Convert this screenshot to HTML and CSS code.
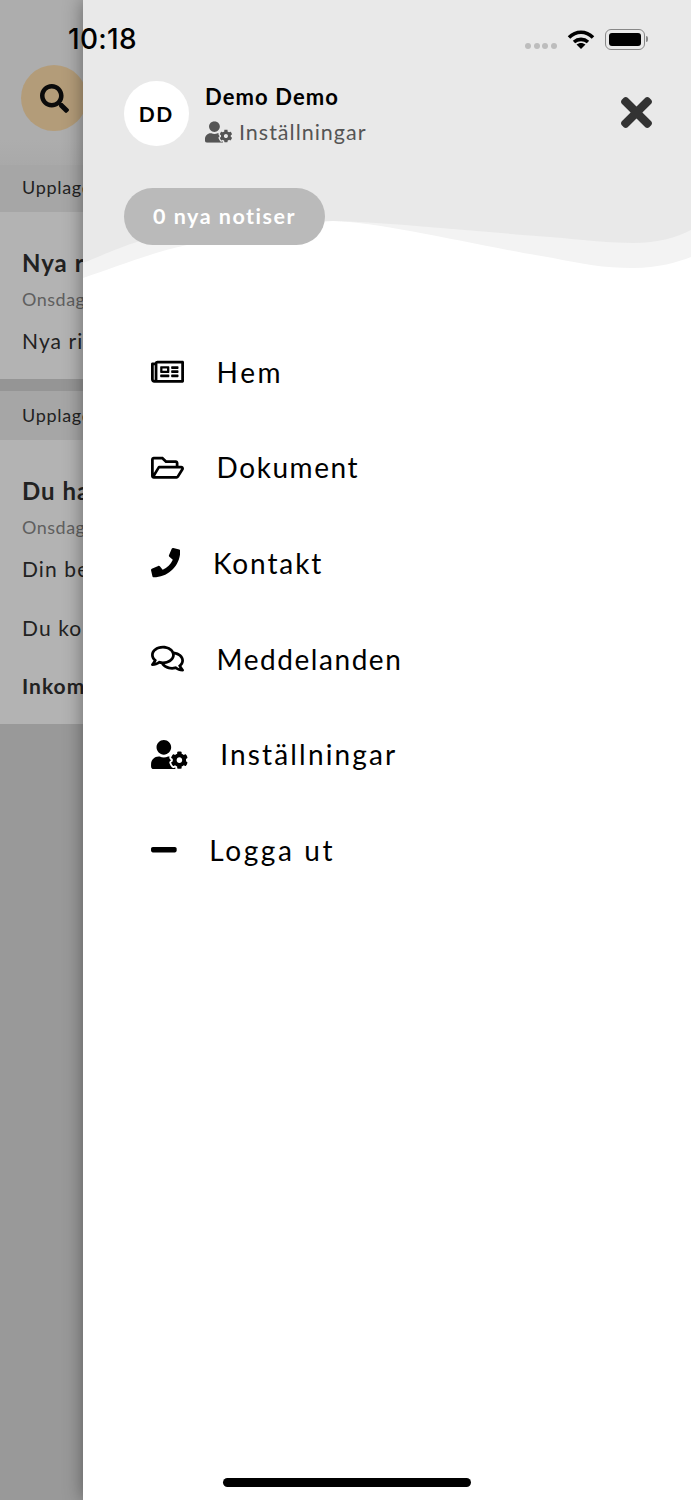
FILE: index.html
```html
<!DOCTYPE html>
<html lang="sv">
<head>
<meta charset="utf-8">
<title>Meny</title>
<link rel="stylesheet" href="styles.css">
</head>
<body>
<div class="screen">
  <div class="behind">
    <div class="topbar">
      <div class="search">
        <svg class="search-icon" viewBox="0 0 512 512"><path d="M505 442.7L405.3 343c-4.5-4.5-10.6-7-17-7H372c27.6-35.3 44-79.7 44-128C416 93.1 322.9 0 208 0S0 93.1 0 208s93.1 208 208 208c48.3 0 92.7-16.4 128-44v16.3c0 6.4 2.5 12.5 7 17l99.7 99.7c9.4 9.4 24.6 9.4 33.9 0l28.3-28.3c9.4-9.4 9.4-24.6.1-34zM208 336c-70.7 0-128-57.2-128-128 0-70.7 57.2-128 128-128 70.7 0 128 57.2 128 128 0 70.7-57.2 128-128 128z"/></svg>
      </div>
    </div>
    <div class="band">Upplagd av Demo</div>
    <div class="card card-one">
      <div class="card-title">Nya riktlinjer</div>
      <div class="card-date">Onsdag 12 maj</div>
      <div class="card-text">Nya riktlinjer gäller</div>
    </div>
    <div class="divider"></div>
    <div class="band band-two">Upplagd av Demo</div>
    <div class="card card-two">
      <div class="card-title">Du har fått ett svar</div>
      <div class="card-date">Onsdag 12 maj</div>
      <div class="card-text">Din begäran är klar</div>
      <div class="card-text card-gap">Du kommer få besked</div>
      <div class="card-strong">Inkommande</div>
    </div>
  </div>

  <div class="drawer">
    <svg class="wave" viewBox="0 0 608 285" aria-hidden="true">
      <path class="wave-light" d="M0 278C30 268 70 252 104 245C150 232 200 222 250 221C300 222 400 247 470 258C500 264 520 268 550 268C575 268 595 262 608 257V0H0Z"/>
      <path class="wave-dark" d="M0 263C20 255 40 246 54 242C100 230 190 222 250 221C300 222 400 232 467 237C500 240 530 243 550 243C575 243 595 237 608 230V0H0Z"/>
    </svg>
    <div class="profile">
      <div class="avatar">DD</div>
      <div class="who">
        <div class="name">Demo Demo</div>
        <div class="settings">
          <svg class="settings-icon" viewBox="0 0 640 512"><use href="#user-cog"/></svg>
          <span>Inställningar</span>
        </div>
      </div>
      <svg class="close" viewBox="0 80 352 352"><path d="M242.72 256l100.07-100.07c12.28-12.28 12.28-32.19 0-44.48l-22.24-22.24c-12.28-12.28-32.19-12.28-44.48 0L176 189.28 75.93 89.21c-12.28-12.28-32.19-12.28-44.48 0L9.21 111.45c-12.28 12.28-12.28 32.19 0 44.48L109.28 256 9.21 356.07c-12.28 12.28-12.28 32.19 0 44.48l22.24 22.24c12.28 12.28 32.2 12.28 44.48 0L176 322.72l100.07 100.07c12.28 12.28 32.2 12.28 44.48 0l22.24-22.24c12.28-12.28 12.28-32.19 0-44.48L242.72 256z"/></svg>
    </div>
    <div class="notices">0 nya notiser</div>
    <nav class="menu">
      <a class="item"><svg class="icon w-33" viewBox="0 0 576 512"><path d="M552 64H112c-20.858 0-38.643 13.377-45.248 32H24c-13.255 0-24 10.745-24 24v272c0 30.928 25.072 56 56 56h496c13.255 0 24-10.745 24-24V88c0-13.255-10.745-24-24-24zM48 392V144h16v248c0 4.411-3.589 8-8 8s-8-3.589-8-8zm480 8H111.422c.374-2.614.578-5.283.578-8V112h416v288zM172 280h136c6.627 0 12-5.373 12-12v-96c0-6.627-5.373-12-12-12H172c-6.627 0-12 5.373-12 12v96c0 6.627 5.373 12 12 12zm28-80h80v40h-80v-40zm-40 140v-24c0-6.627 5.373-12 12-12h136c6.627 0 12 5.373 12 12v24c0 6.627-5.373 12-12 12H172c-6.627 0-12-5.373-12-12zm192 0v-24c0-6.627 5.373-12 12-12h104c6.627 0 12 5.373 12 12v24c0 6.627-5.373 12-12 12H364c-6.627 0-12-5.373-12-12zm0-144v-24c0-6.627 5.373-12 12-12h104c6.627 0 12 5.373 12 12v24c0 6.627-5.373 12-12 12H364c-6.627 0-12-5.373-12-12zm0 72v-24c0-6.627 5.373-12 12-12h104c6.627 0 12 5.373 12 12v24c0 6.627-5.373 12-12 12H364c-6.627 0-12-5.373-12-12z"/></svg><span class="label ls-wide">Hem</span></a>
      <a class="item"><svg class="icon w-33" viewBox="0 0 576 512"><path d="M527.9 224H480v-48c0-26.5-21.5-48-48-48H272l-64-64H48C21.5 64 0 85.5 0 112v288c0 26.5 21.5 48 48 48h400c16.5 0 31.9-8.5 40.7-22.6l79.9-128c20-31.9-3-73.4-40.7-73.4zM48 118c0-3.3 2.7-6 6-6h134.1l64 64H426c3.3 0 6 2.7 6 6v42H152c-16.8 0-32.4 8.8-41.1 23.2L48 351.4zm400 282H72l77.2-128H528z"/></svg><span class="label ls-base">Dokument</span></a>
      <a class="item"><svg class="icon w-30" viewBox="0 0 512 512"><path d="M493.4 24.6l-104-24c-11.3-2.6-22.9 3.3-27.5 13.9l-48 112c-4.2 9.8-1.4 21.3 6.9 28l60.6 49.6c-36 76.7-98.9 140.5-177.2 177.2l-49.6-60.6c-6.8-8.3-18.2-11.1-28-6.9l-112 48C3.9 366.5-2 378.1.6 389.4l24 104C27.1 504.2 36.7 512 48 512c256.1 0 464-207.5 464-464 0-11.2-7.7-20.9-18.6-23.4z"/></svg><span class="label ls-mid">Kontakt</span></a>
      <a class="item"><svg class="icon w-33" viewBox="0 0 576 512"><path d="M532 386.2c27.5-27.1 44-61.1 44-98.2 0-80-76.5-146.1-176.2-157.9C368.3 72.5 294.3 32 208 32 93.1 32 0 103.6 0 192c0 37 16.5 71 44 98.2-15.3 30.7-37.3 54.5-37.7 54.9-6.3 6.7-8.1 16.5-4.4 25 3.6 8.5 12 14 21.2 14 53.5 0 96.7-20.2 125.2-38.8 9.2 2.1 18.7 3.7 28.4 4.9C208.1 407.6 281.8 448 368 448c20.8 0 40.8-2.4 59.8-6.8C456.3 459.7 499.4 480 553 480c9.2 0 17.5-5.5 21.2-14 3.6-8.5 1.9-18.3-4.4-25-.4-.3-22.5-24.1-37.8-54.8zm-392.8-92.3L122.1 305c-14.1 9.1-28.5 16.3-43.1 21.4 2.7-4.7 5.4-9.7 8-14.8l15.5-31.1L77.7 256C64.2 242.6 48 220.7 48 192c0-60.7 73.3-112 160-112s160 51.3 160 112-73.3 112-160 112c-16.5 0-33-1.9-49-5.6l-19.8-4.5zM498.3 352l-24.7 24.4 15.5 31.1c2.6 5.1 5.3 10.1 8 14.8-14.6-5.1-29-12.3-43.1-21.4l-17.1-11.1-19.9 4.6c-16 3.7-32.5 5.6-49 5.6-54 0-102.2-20.1-131.3-49.7C338 339.5 416 272.9 416 192c0-3.4-.4-6.7-.7-10C479.7 196.5 528 238.8 528 288c0 28.7-16.2 50.6-29.7 64z"/></svg><span class="label ls-base">Meddelanden</span></a>
      <a class="item"><svg class="icon w-37" viewBox="0 0 640 512"><use href="#user-cog"/></svg><span class="label ls-mid2">Inställningar</span></a>
      <a class="item"><svg class="icon w-26" viewBox="0 0 448 512"><path d="M416 208H32c-17.67 0-32 14.33-32 32v32c0 17.67 14.33 32 32 32h384c17.67 0 32-14.33 32-32v-32c0-17.67-14.33-32-32-32z"/></svg><span class="label ls-wide">Logga ut</span></a>
    </nav>
  </div>

  <div class="status">
    <span class="time">10:18</span>
    <div class="status-icons">
      <div class="dots"><i></i><i></i><i></i><i></i></div>
      <svg class="wifi" viewBox="0 0 28 20"><path class="arc" d="M2 8.5C9 1.5 19 1.5 26 8.5"/><path class="arc" d="M7 13C11 9.5 17 9.5 21 13"/><path d="M14 20L9.5 15.5C12 13.4 16 13.4 18.5 15.5Z"/></svg>
      <div class="battery"><div class="battery-fill"></div></div>
      <div class="nub"></div>
    </div>
  </div>
  <div class="home-bar"></div>
</div>

<svg class="defs" aria-hidden="true"><defs><symbol id="user-cog" viewBox="0 0 640 512"><path d="M610.5 373.3c2.6-14.1 2.6-28.5 0-42.6l25.8-14.9c3-1.7 4.3-5.2 3.3-8.5-6.7-21.6-18.2-41.2-33.2-57.4-2.3-2.5-6-3.1-9-1.4l-25.8 14.9c-10.9-9.3-23.4-16.5-36.9-21.3v-29.8c0-3.4-2.4-6.4-5.7-7.1-22.3-5-45-4.8-66.2 0-3.3.7-5.7 3.7-5.7 7.1v29.8c-13.5 4.8-26 12-36.9 21.3l-25.8-14.9c-2.9-1.7-6.7-1.1-9 1.4-15 16.2-26.5 35.8-33.2 57.4-1 3.3.4 6.8 3.3 8.5l25.8 14.9c-2.6 14.1-2.6 28.5 0 42.6l-25.8 14.9c-3 1.7-4.3 5.2-3.3 8.5 6.7 21.6 18.2 41.1 33.2 57.4 2.3 2.5 6 3.1 9 1.4l25.8-14.9c10.9 9.3 23.4 16.5 36.9 21.3v29.8c0 3.4 2.4 6.4 5.7 7.1 22.3 5 45 4.8 66.2 0 3.3-.7 5.7-3.7 5.7-7.1v-29.8c13.5-4.8 26-12 36.9-21.3l25.8 14.9c2.9 1.7 6.7 1.1 9-1.4 15-16.2 26.5-35.8 33.2-57.4 1-3.3-.4-6.8-3.3-8.5l-25.8-14.9zM496 400.5c-26.8 0-48.5-21.8-48.5-48.5s21.8-48.5 48.5-48.5 48.5 21.8 48.5 48.5-21.7 48.5-48.5 48.5zM224 256c70.7 0 128-57.3 128-128S294.7 0 224 0 96 57.3 96 128s57.3 128 128 128zm201.2 226.5c-2.3-1.2-4.6-2.6-6.8-3.9l-7.9 4.6c-6 3.4-12.8 5.3-19.6 5.3-10.9 0-21.4-4.6-28.9-12.6-18.3-19.8-32.3-43.9-40.2-69.6-5.5-17.7 1.9-36.4 17.9-45.7l7.9-4.6c-.1-2.6-.1-5.2 0-7.8l-7.9-4.6c-16-9.2-23.4-28-17.9-45.7.9-2.9 2.2-5.8 3.2-8.7-3.8-.3-7.5-1.2-11.4-1.2h-16.7c-22.2 10.2-46.9 16-72.9 16s-50.6-5.8-72.9-16h-16.7C60.2 288 0 348.2 0 422.4V464c0 26.5 21.5 48 48 48h352c10.1 0 19.5-3.2 27.2-8.5-1.2-3.8-2-7.7-2-11.8v-9.2z"/></symbol></defs></svg>
</body>
</html>
```
FILE: styles.css
```css
* { box-sizing: border-box; }
html, body { margin: 0; padding: 0; background: #fff; }
body { font-family: "Lato", "Noto Sans", sans-serif; color: #000; }
.defs { display: none; }
.screen { position: relative; display: flex; width: 693px; height: 1500px; overflow: hidden; background: #fff; }

.behind { flex: 0 0 83px; height: 100%; overflow: hidden; background: #999; white-space: nowrap; color: #222; }
.topbar { height: 165px; padding: 65px 0 0 21px; background: linear-gradient(#adadad 0, #adadad 140px, #a9a9a9 100%); }
.search { display: flex; align-items: center; justify-content: center; width: 66px; height: 66px; border-radius: 50%; background: #b39c79; }
.search-icon { width: 29px; height: 29px; fill: #0b0b0b; }
.band { height: 47px; padding-left: 22px; background: #a6a6a6; font-size: 18px; line-height: 44px; letter-spacing: .7px; }
.band-two { height: 49px; line-height: 48px; }
.card { background: #b3b3b3; padding-left: 22px; }
.card-one { height: 167px; padding-top: 36px; }
.card-two { height: 284px; padding-top: 36px; }
.card-title { font-size: 24px; font-weight: 700; line-height: 30px; letter-spacing: 1px; }
.card-date { margin-top: 10px; font-size: 18px; line-height: 22px; color: #5f5f5f; letter-spacing: .5px; }
.card-text { margin-top: 17px; font-size: 21px; line-height: 28px; letter-spacing: 1.1px; }
.card-gap { margin-top: 31px; }
.card-strong { margin-top: 30px; font-size: 21px; line-height: 28px; font-weight: 700; letter-spacing: 1px; }
.divider { height: 12px; background: #959595; }

.drawer { position: relative; flex: 0 0 608px; height: 100%; background: #fff; box-shadow: 0 0 18px rgba(0,0,0,.42); clip-path: inset(0 0 0 -30px); }
.wave { position: absolute; left: 0; top: 0; width: 608px; height: 285px; }
.wave-light { fill: #f3f3f3; }
.wave-dark { fill: #e9e9e9; }

.profile { position: relative; display: flex; align-items: center; height: 65px; margin: 81px 0 0 41px; }
.avatar { display: flex; align-items: center; justify-content: center; flex: 0 0 64.5px; height: 64.5px; border-radius: 50%; background: #fff; font-size: 21px; font-weight: 700; letter-spacing: 1.6px; }
.who { margin-left: 16.5px; flex: 1; }
.name { position: relative; top: 1px; font-size: 22px; font-weight: 700; line-height: 30px; letter-spacing: 1.1px; }
.settings { display: flex; align-items: center; gap: 7px; margin-top: 6px; color: #555; font-size: 21.5px; line-height: 30px; letter-spacing: 1px; }
.settings-icon { width: 27px; height: 22px; fill: #555; }
.close { width: 31px; height: 31px; margin: 0 39px 2px 0; fill: #333; }

.notices { position: relative; display: flex; align-items: center; justify-content: center; width: 201px; height: 57px; margin: 42px 0 0 41px; padding-bottom: 2px; border-radius: 28.5px; background: #bababa; color: #fff; font-size: 21.5px; font-weight: 700; letter-spacing: 1.5px; }

.menu { display: flex; flex-direction: column; margin: 79px 0 0 68px; }
.item { display: flex; align-items: center; gap: 32.6px; height: 95.6px; font-size: 28px; color: #000; }
.ls-base { letter-spacing: 1.55px; }
.ls-mid { letter-spacing: 1.9px; }
.ls-mid2 { letter-spacing: 2.15px; }
.ls-wide { letter-spacing: 2.6px; }
.icon { height: 29.3px; fill: #000; flex: none; }
.w-33 { width: 33px; }
.w-30 { width: 29.3px; }
.w-37 { width: 36.7px; }
.w-26 { width: 25.7px; }

.status { position: absolute; top: 0; left: 0; right: 0; height: 0; }
.time { position: absolute; left: 68px; top: 22px; font-family: "Inter", sans-serif; font-size: 28px; line-height: 34px; font-weight: 500; letter-spacing: .3px; color: #000; }
.status-icons { position: absolute; left: 525px; top: 29px; display: flex; align-items: flex-start; }
.dots { display: flex; gap: 2.5px; margin-top: 14px; }
.dots i { display: block; width: 6px; height: 6px; border-radius: 50%; background: #bdbdbd; }
.wifi { width: 28px; height: 20px; margin-left: 10.5px; fill: #000; }
.arc { fill: none; stroke: #000; stroke-width: 3.6px; }
.battery { width: 40px; height: 21px; margin-left: 10px; padding: 3px; border: 1.5px solid #888; border-radius: 6px; }
.battery-fill { width: 100%; height: 100%; background: #000; border-radius: 3px; }
.nub { width: 2px; height: 6px; margin: 7px 0 0 1px; background: #888; border-radius: 0 2px 2px 0; }
.home-bar { position: absolute; left: 223px; top: 1478px; width: 248px; height: 9px; border-radius: 4.5px; background: #000; }
```
